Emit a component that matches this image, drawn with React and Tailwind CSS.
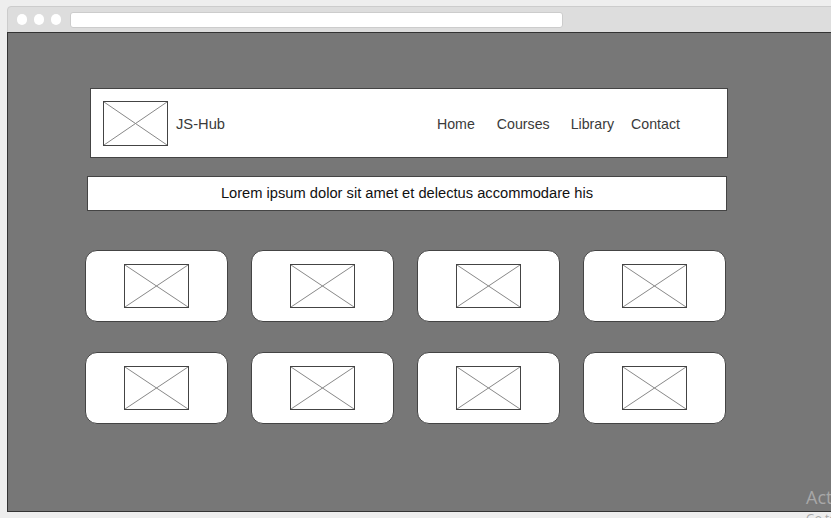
import React from 'react';

const Placeholder = ({ w, h }) => (
  <div className="border border-[#444444] bg-white" style={{ width: w, height: h }}>
    <svg width="100%" height="100%" viewBox="0 0 100 100" preserveAspectRatio="none" className="block">
      <line x1="0" y1="0" x2="100" y2="100" stroke="#888888" strokeWidth="1" vectorEffect="non-scaling-stroke" />
      <line x1="100" y1="0" x2="0" y2="100" stroke="#888888" strokeWidth="1" vectorEffect="non-scaling-stroke" />
    </svg>
  </div>
);

const Card = () => (
  <div className="w-[143px] h-[72px] rounded-[12px] border border-[#444444] bg-white flex items-center justify-center">
    <Placeholder w={65} h={44} />
  </div>
);

function App() {
  const navItems = [
    { label: 'Home', cls: 'ml-0' },
    { label: 'Courses', cls: 'ml-[22px]' },
    { label: 'Library', cls: 'ml-[21px]' },
    { label: 'Contact', cls: 'ml-[17px]' },
  ];

  return (
    <div className="relative w-[831px] h-[518px] overflow-hidden bg-[#eeeeee] font-['Liberation_Sans',Arial,sans-serif]">
      {/* Browser frame */}
      <div className="absolute left-[7px] top-[6px] w-[830px] h-[506px] rounded-t-[4px] bg-[#dddddd] border border-[#cccccc] flex flex-col">
        {/* Chrome bar */}
        <div className="h-[25px] flex items-center pl-[9px]">
          <div className="w-[10px] h-[11px] rounded-full bg-white"></div>
          <div className="w-[10px] h-[11px] rounded-full bg-white ml-[7px]"></div>
          <div className="w-[10px] h-[11px] rounded-full bg-white ml-[7px]"></div>
          <div className="w-[493px] h-[16px] rounded-[3px] bg-white border border-[#cccccc] ml-[9px]"></div>
        </div>

        {/* Page area */}
        <div className="flex-1 bg-[#777777] border border-[#333333] -mx-px -mb-px">
          <div className="ml-[77px] w-[641px] flex flex-col">
            {/* Header */}
            <div className="mt-[55px] ml-[5px] w-[638px] h-[70px] bg-white border border-[#444444] flex items-center pl-[12px]">
              <Placeholder w={65} h={45} />
              <span className="ml-[8px] mt-[2px] text-[14.7px] text-[#3a3a3a]">JS-Hub</span>
              <nav className="ml-[212px] mt-[4px] flex text-[14.2px] text-[#3a3a3a]">
                {navItems.map((item) => (
                  <span key={item.label} className={item.cls}>{item.label}</span>
                ))}
              </nav>
            </div>

            {/* Banner */}
            <div className="mt-[18px] ml-[2px] w-[640px] h-[35px] bg-white border border-[#444444] flex items-center justify-center text-[14.7px] text-[#111111]">
              Lorem ipsum dolor sit amet et delectus accommodare his
            </div>

            {/* Cards */}
            <div className="mt-[39px] grid grid-cols-4 gap-x-[23px] gap-y-[30px]">
              {Array.from({ length: 8 }).map((_, i) => (
                <Card key={i} />
              ))}
            </div>
          </div>
        </div>
      </div>

      {/* Watermark */}
      <div className="absolute left-[806px] top-[486px] text-[18px] leading-[22px] text-[#a8a8a8] whitespace-nowrap font-['Open_Sans',sans-serif]">
        <div>Activate</div>
        <div className="text-[12px]">Go to</div>
      </div>
    </div>
  );
}

export default App;
